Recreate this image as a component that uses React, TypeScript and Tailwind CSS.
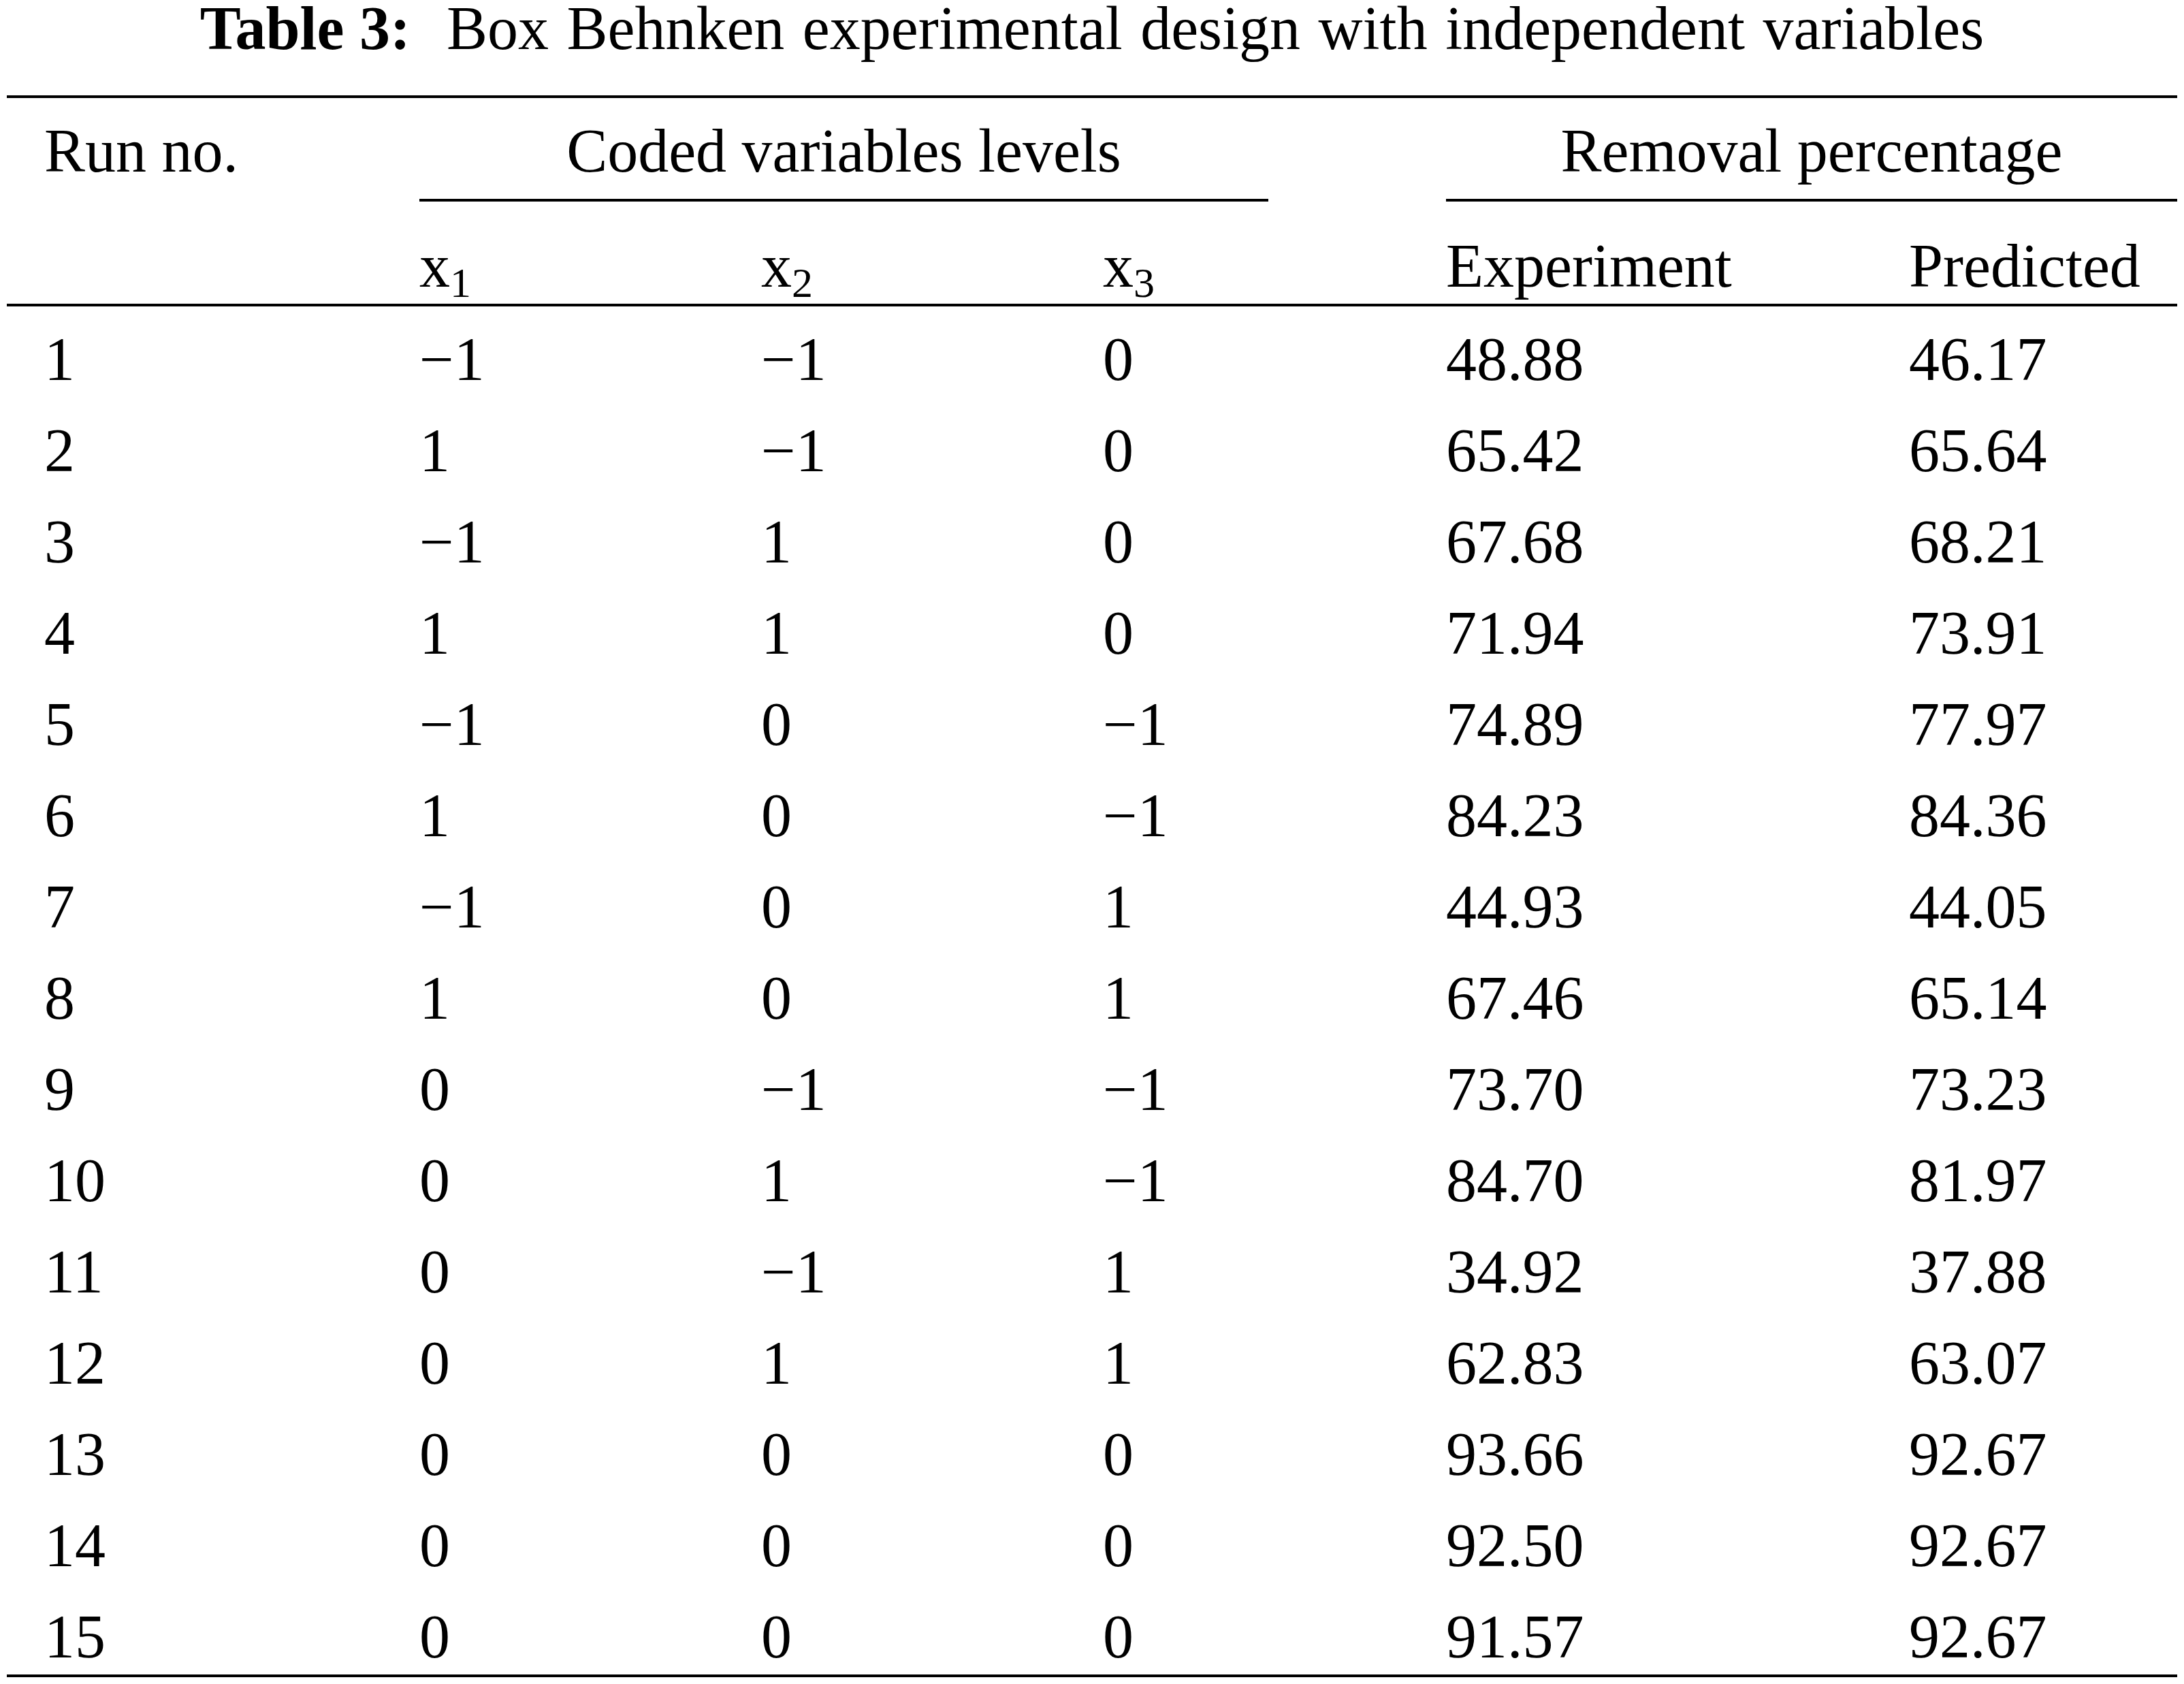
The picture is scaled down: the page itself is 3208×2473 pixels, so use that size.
const rows: [number, number, number, number, string, string][] = [
  [1, -1, -1, 0, "48.88", "46.17"],
  [2, 1, -1, 0, "65.42", "65.64"],
  [3, -1, 1, 0, "67.68", "68.21"],
  [4, 1, 1, 0, "71.94", "73.91"],
  [5, -1, 0, -1, "74.89", "77.97"],
  [6, 1, 0, -1, "84.23", "84.36"],
  [7, -1, 0, 1, "44.93", "44.05"],
  [8, 1, 0, 1, "67.46", "65.14"],
  [9, 0, -1, -1, "73.70", "73.23"],
  [10, 0, 1, -1, "84.70", "81.97"],
  [11, 0, -1, 1, "34.92", "37.88"],
  [12, 0, 1, 1, "62.83", "63.07"],
  [13, 0, 0, 0, "93.66", "92.67"],
  [14, 0, 0, 0, "92.50", "92.67"],
  [15, 0, 0, 0, "91.57", "92.67"],
];

const coded = (v: number) => (v < 0 ? "\u2212" + Math.abs(v) : String(v));

const cols = "grid grid-cols-[606px_502px_502px_504px_680px_394px]";

const Sub: React.FC<{ n: number }> = ({ n }) => (
  <span className="text-[62px] leading-[0] align-[-15px]">{n}</span>
);

export default function App() {
  return (
    <div className="w-[3208px] h-[2473px] bg-white text-black font-['Liberation_Serif','Times_New_Roman',serif] text-[90px] px-[10px]">
      {/* caption */}
      <div className="leading-[84px] mb-[56px] text-center whitespace-pre">
        <span className="font-bold">Table 3:</span>
        <span className="[word-spacing:4px]">{"  Box Behnken experimental design with independent variables"}</span>
      </div>

      <div className="h-[4px] bg-black" />

      {/* header */}
      <div className={cols}>
        <div className="pl-[55px] pt-[33px] leading-[90px]">Run no.</div>
        <div className="col-span-3">
          <div className="w-[1247px] pt-[33px] pb-[25px] leading-[90px] text-center">
            Coded variables levels
          </div>
          <div className="w-[1247px] h-[4px] bg-black" />
        </div>
        <div className="col-span-2">
          <div className="pt-[33px] pb-[25px] leading-[90px] text-center">Removal percentage</div>
          <div className="h-[4px] bg-black" />
        </div>

        <div />
        <div className="pt-[50px] pb-[10px] leading-[90px]">
          x<Sub n={1} />
        </div>
        <div className="pt-[50px] pb-[10px] leading-[90px]">
          x<Sub n={2} />
        </div>
        <div className="pt-[50px] pb-[10px] leading-[90px]">
          x<Sub n={3} />
        </div>
        <div className="pt-[50px] pb-[10px] leading-[90px]">Experiment</div>
        <div className="pt-[50px] pb-[10px] leading-[90px]">Predicted</div>
      </div>

      <div className="h-[4px] bg-black" />

      {/* body */}
      <div className={`${cols} gap-y-[24px] pt-[23px] leading-[110px]`}>
        {rows.map(([run, a, b, c, exp, pred]) => (
          <div key={run} className="contents">
            <div className="pl-[55px]">{run}</div>
            <div>{coded(a)}</div>
            <div>{coded(b)}</div>
            <div>{coded(c)}</div>
            <div>{exp}</div>
            <div>{pred}</div>
          </div>
        ))}
      </div>

      <div className="h-[4px] bg-black" />
    </div>
  );
}
